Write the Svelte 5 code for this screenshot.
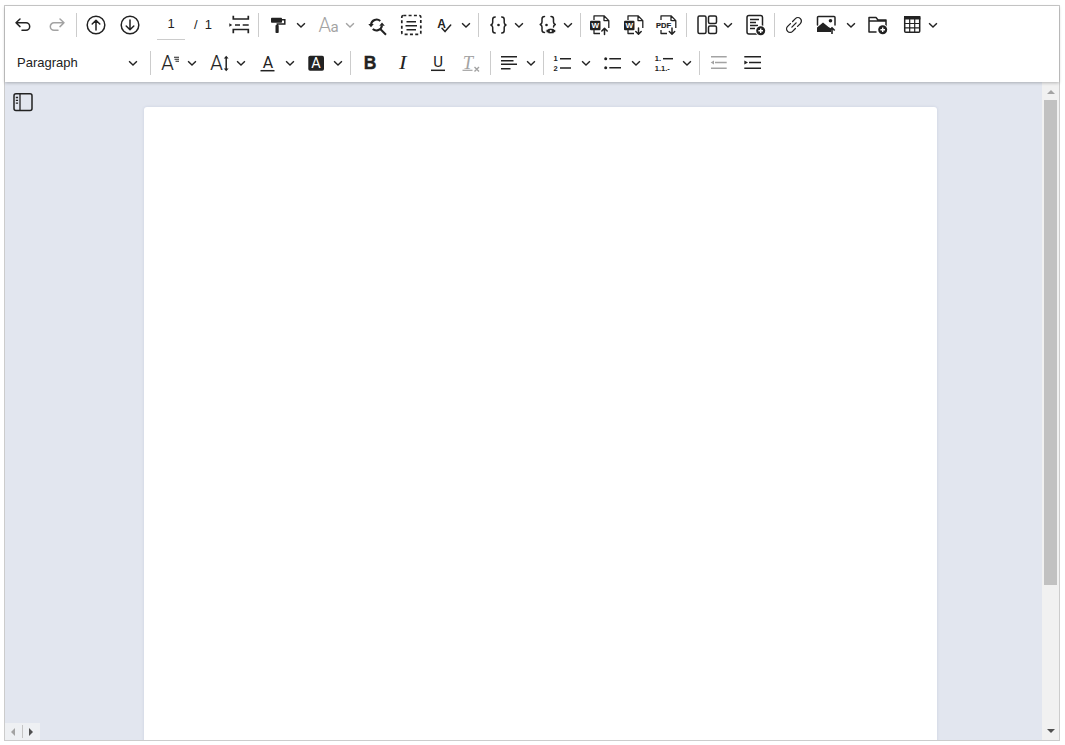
<script>
  const line = 'fill="none" stroke="currentColor" stroke-width="1.5" stroke-linecap="round" stroke-linejoin="round"';
  const thin = 'fill="none" stroke="currentColor" stroke-width="1.3" stroke-linejoin="round"';
  const sans = 'font-family="Liberation Sans, Arial, sans-serif"';
  const serif = 'font-family="Liberation Serif, Times New Roman, serif"';
  const bigA = 'x="9.500" y="19" font-size="20" font-weight="300" text-anchor="middle" fill="currentColor" stroke="currentColor" stroke-width=".15" font-family="Roboto, sans-serif"';

  const braces = (bottom) =>
    `<path ${line} d="M9.500 4C7.500 4 7 5 7 6.500v3c0 1.200-.7 2-1.800 2.500C6.300 12.500 7 13.300 7 14.500v3c0 1.500.5 2.500 2.500 2.500"/>` +
    (bottom
      ? `<path ${line} d="M16 4c2 0 2.500 1 2.500 2.500v3c0 1.200.7 2 1.800 2.500-1.100.5-1.800 1.300-1.800 2.500"/>`
      : `<path ${line} d="M16 4c2 0 2.500 1 2.500 2.500v3c0 1.200.7 2 1.800 2.500-1.100.5-1.800 1.300-1.800 2.500v3c0 1.500-.5 2.500-2.500 2.500"/>`);

  const docOutline = `<path ${thin} d="M6 7V2.800h10l4.800 4.800v7.400M6 17v3.500h6M16 2.800v4.800h4.800"/>`;
  const wordBadge = `<rect x="2" y="7.700" width="10.500" height="9.600" rx="1" fill="currentColor"/><text x="7.200" y="15.200" font-size="8" font-weight="700" text-anchor="middle" fill="#fff" ${sans}>W</text>`;
  const plusBadge = (cx, cy) =>
    `<circle cx="${cx}" cy="${cy}" r="5.500" fill="#fff"/><circle cx="${cx}" cy="${cy}" r="4.500" fill="currentColor"/><path d="M${cx - 2.3} ${cy}h4.600M${cx} ${cy - 2.3}v4.600" stroke="#fff" stroke-width="1.400"/>`;

  const icons = {
    undo: `<path ${line} d="M9 6 5 9.800l4 3.800M5 9.800h10a3.700 3.700 0 0 1 0 7.400h-4"/>`,
    redo: `<path ${line} d="M15 6l4 3.800-4 3.800M19 9.800H9a3.700 3.700 0 0 0 0 7.400h4"/>`,
    up: `<circle cx="12" cy="12" r="8.800" ${line} stroke-width="1.700"/><path ${line} stroke-width="1.700" d="M12 17V7.500M8.200 11 12 7.200l3.800 3.800"/>`,
    down: `<circle cx="12" cy="12" r="8.800" ${line} stroke-width="1.700"/><path ${line} stroke-width="1.700" d="M12 7v9.500M8.200 13l3.800 3.800 3.800-3.800"/>`,
    break: `<path fill="none" stroke="#222" stroke-width="1.700" d="M6.300 2.700V6h15V2.700M6.300 20.300V16.500h15v3.800M8 12h5M15.700 12h6"/><path d="M2.300 10.300 5.200 12l-2.900 1.700z" fill="currentColor"/>`,
    paint: `<rect x="5" y="4.700" width="11" height="5" rx=".8" fill="currentColor"/><path d="M16 6.700h2.800v4.300h-7.500v2" fill="none" stroke="currentColor" stroke-width="1.500"/><rect x="9.500" y="12" width="3.200" height="8" rx=".8" fill="currentColor"/>`,
    aa: `<text x="2.500" y="19" font-size="20" font-weight="300" font-family="Roboto, sans-serif" fill="currentColor">A</text><text x="14.500" y="19" font-size="15" font-family="Roboto, sans-serif" fill="currentColor">a</text>`,
    replace: `<path fill="none" stroke="currentColor" stroke-width="2" d="M6 11.500a5.700 5.700 0 0 1 9.300-3.600M17 12.500a5.700 5.700 0 0 1-9.300 3.600M15.500 16.200 21 21.700"/><path d="M3.300 11 6 14.300 8.800 11zM19.800 12.800 17 9.500l-2.700 3.300z" fill="currentColor"/>`,
    select: `<rect x="2.800" y="2.500" width="19" height="18.800" rx="1.500" fill="none" stroke="currentColor" stroke-width="1.700" stroke-dasharray="3 2.300"/><path d="M7.500 8.700h9.500M6.500 12.700h11.500M7.500 16.700h9.500" stroke="currentColor" stroke-width="1.400"/>`,
    spell: `<text x="9.500" y="14.800" font-size="12" font-weight="700" text-anchor="middle" fill="currentColor" ${sans}>A</text><path ${line} d="M10 15.300l3 3.300 5.700-6.600"/>`,
    code: `<g transform="translate(.7)">${braces(false)}<circle cx="12.800" cy="12" r="1.300" fill="currentColor"/></g>`,
    codeview: `<g transform="translate(1 -.5)">${braces(true)}<circle cx="11.500" cy="12.500" r="1.300" fill="currentColor"/><path d="M10.500 18.500c2.700-3.800 8-3.800 10.700 0-2.700 3.800-8 3.800-10.700 0z" fill="currentColor" stroke="#fff" stroke-width=".8"/><circle cx="15.800" cy="18.500" r="1.100" fill="#fff"/></g>`,
    wordup: `${docOutline}${wordBadge}<path ${line} d="M16.500 21.500v-6M13.800 18l2.700-2.700 2.700 2.700"/>`,
    worddown: `${docOutline}${wordBadge}<path ${line} d="M16.500 15v6M13.800 18.500l2.700 2.700 2.700-2.700"/>`,
    pdf: `<path ${thin} d="M6 7V2.800h10l4.800 4.800v7.400M6 17v3.500h6M16 2.800v4.800h4.800"/><rect x="1" y="8" width="15.500" height="8.500" fill="#fff"/><text x="8.600" y="15" font-size="7.500" font-weight="700" text-anchor="middle" fill="currentColor" stroke="currentColor" stroke-width=".2" ${sans}>PDF</text><path ${line} d="M17 15v6M14.300 18.500l2.700 2.700 2.700-2.700"/>`,
    layout: `<g fill="none" stroke="currentColor" stroke-width="1.500"><rect x="4" y="3" width="8" height="17.500" rx="1.500"/><rect x="14.500" y="3" width="8" height="7.500" rx="1.500"/><rect x="14.500" y="13" width="8" height="7.500" rx="1.500"/></g>`,
    docadd: `<rect x="4" y="2.500" width="15.500" height="18.500" rx="2" ${line}/><path d="M7 6.500h9M7 9.500h6M7 12.500h8M7 15.500h5" stroke="currentColor" stroke-width="1.300"/>${plusBadge(17.7, 17.7)}`,
    link: `<g transform="rotate(45 12 12)"><path fill="none" stroke="currentColor" stroke-width="1.300" stroke-linecap="round" d="M8.500 10.500V6.500a3.500 3.500 0 0 1 7 0v4M15.500 13.500v4a3.500 3.500 0 0 1-7 0v-4M12 9v6"/></g>`,
    image: `<path d="M1.500 12V4.500a1 1 0 0 1 1-1h15.500a1 1 0 0 1 1 1V12" ${line}/><path d="M1 19v-4.500l6-5 5.500 4.500 2.500 1.500V19z" fill="currentColor"/><circle cx="14.500" cy="7.700" r="1.800" fill="currentColor"/><path d="M16 21v-6M13.300 17.500l2.700-2.700 2.700 2.700" fill="none" stroke="currentColor" stroke-width="1.600"/>`,
    folder: `<path ${line} d="M3 8V4.500h7l2 2.500h8v6M3 8v11h7M3 8h17"/>${plusBadge(16.7, 16.7)}`,
    table: `<rect x="5.700" y="3.700" width="15" height="15.500" rx="1" fill="none" stroke="currentColor" stroke-width="1.500"/><rect x="5" y="3" width="16.400" height="3.500" fill="currentColor"/><path d="M10.700 6v13M15.700 6v13M6 10.500h14.500M6 14.800h14.500" stroke="currentColor" stroke-width="1.200"/>`,
    fontfam: `<text ${bigA}>A</text><path d="M16 6.300h5M16.500 8.300h4.500M17.500 10.300h3.500" stroke="currentColor" stroke-width="1.100"/>`,
    fontsize: `<text ${bigA}>A</text><path d="M19.200 6v13" stroke="currentColor" stroke-width="1.500"/><path d="M16.800 7.500 19.200 4.700l2.400 2.800zM16.800 17.500l2.400 2.800 2.400-2.800z" fill="currentColor"/>`,
    color: `<text x="12" y="16.500" font-size="16" text-anchor="middle" fill="currentColor" font-family="Roboto, sans-serif">A</text><path d="M4.500 19.700h14" stroke="currentColor" stroke-width="1.500"/>`,
    bgcolor: `<rect x="4.300" y="4.700" width="15.700" height="15" rx="1.800" fill="currentColor"/><text x="12.100" y="17.300" font-size="14.500" text-anchor="middle" fill="#fff" font-family="Roboto, sans-serif">A</text>`,
    bold: `<text x="12" y="18.300" font-size="17.500" font-weight="700" text-anchor="middle" fill="currentColor" stroke="currentColor" stroke-width=".4" ${sans}>B</text>`,
    italic: `<text x="7" y="18.300" font-size="18.500" font-style="italic" textLength="7.500" lengthAdjust="spacingAndGlyphs" fill="currentColor" ${serif}>I</text>`,
    underline: `<text x="12" y="15.800" font-size="15" text-anchor="middle" fill="currentColor" font-family="Roboto, sans-serif">U</text><path d="M5 19.300h14" stroke="currentColor" stroke-width="1.500"/>`,
    clear: `<text x="9" y="17.500" font-size="18.500" font-style="italic" text-anchor="middle" fill="currentColor" ${serif}>T</text><path d="M3.500 19.300h10" stroke="currentColor" stroke-width="1.200"/><path d="M15.500 16l4.500 4.500M20 16l-4.500 4.500" stroke="currentColor" stroke-width="1.400"/>`,
    align: `<path d="M4 5.700h16M4 9.700h12.500M4 13.300h16M4 17.700h9.500" stroke="currentColor" stroke-width="1.500"/>`,
    ol: `<text x="4.500" y="10" font-size="7.500" font-weight="700" text-anchor="middle" fill="currentColor" ${sans}>1</text><text x="4.500" y="19.700" font-size="7.500" font-weight="700" text-anchor="middle" fill="currentColor" ${sans}>2</text><path d="M9 7.700h11M9 17h11" stroke="currentColor" stroke-width="1.500"/>`,
    ul: `<circle cx="4.700" cy="7.700" r="1.500" fill="currentColor"/><circle cx="4.700" cy="16.700" r="1.500" fill="currentColor"/><path d="M8.300 7.700h11.700M8.300 16.700h11.700" stroke="currentColor" stroke-width="1.500"/>`,
    ml: `<text x="2.800" y="10" font-size="7.500" font-weight="700" fill="currentColor" ${sans}>1.</text><text x="2.800" y="19.500" font-size="7.500" font-weight="700" fill="currentColor" ${sans}>1.1.-</text><path d="M11 7.700h10" stroke="currentColor" stroke-width="1.500"/>`,
    outdent: `<path d="M4 5.700h15.700M8 11.500h11.700M4 17.300h15.700" stroke="currentColor" stroke-width="1.500"/><path d="M3.700 11.500 7 9.500v4z" fill="currentColor"/>`,
    indent: `<path d="M3.300 5.700h16.700M8 11.500h12M3.300 17.300h16.700" stroke="currentColor" stroke-width="1.500"/><path d="M7 11.500 3.300 9.500v4z" fill="currentColor"/>`
  };

  // name:width:dim, "v" is a dropdown chevron, "|" a divider
  const row1 = ['undo', 'redo::dim', '|', 'up', 'down', 'pager', 'break', '|', 'paint', 'v', 'aa:33:dim', 'v::dim',
    'replace', 'select', 'spell:32', 'v', '|', 'code:32', 'v', 'codeview:33', 'v', '|', 'wordup', 'worddown:33', 'pdf', '|',
    'layout:33', 'v', 'docadd', '|', 'link', 'image', 'v', 'folder', 'table:32', 'v'];
  const row2 = ['para', '|', 'fontfam:33', 'v', 'fontsize:33', 'v', 'color:33', 'v', 'bgcolor:32', 'v', '|',
    'bold', 'italic', 'underline:33', 'clear::dim', '|', 'align:32', 'v', '|', 'ol', 'v', 'ul', 'v', 'ml:35', 'v', '|',
    'outdent::dim', 'indent'];

  const parse = (row) => row.map((s) => {
    const [name, w, dim] = s.split(':');
    return { name, w: w || 34, dim: !!dim };
  });
  const rows = [parse(row1), parse(row2)];
</script>

<div class="editor">
  <div class="toolbar">
    {#each rows as row}
      <div class="row">
        {#each row as item}
          {#if item.name === '|'}
            <span class="sep"></span>
          {:else if item.name === 'v'}
            <button class="chev" class:dim={item.dim}>
              <svg width="12" height="12" viewBox="0 0 12 12"><path d="M2.100 4.200 6 8.100l3.900-3.900" fill="none" stroke="currentColor" stroke-width="1.400"/></svg>
            </button>
          {:else if item.name === 'pager'}
            <div class="pager">
              <input value="1" />
              <span>/</span>
              <span>1</span>
            </div>
          {:else if item.name === 'para'}
            <div class="para">
              <span>Paragraph</span>
              <svg width="12" height="12" viewBox="0 0 12 12"><path d="M2.100 4.200 6 8.100l3.900-3.900" fill="none" stroke="currentColor" stroke-width="1.400"/></svg>
            </div>
          {:else}
            <button class="btn w{item.w}" class:dim={item.dim}>
              <svg width="24" height="24" viewBox="0 0 24 24">{@html icons[item.name]}</svg>
            </button>
          {/if}
        {/each}
      </div>
    {/each}
  </div>

  <div class="body">
    <div class="canvas">
      <button class="panel-toggle">
        <svg width="24" height="24" viewBox="0 0 24 24">
          <rect x="3" y="3.700" width="18" height="16.700" rx="2" fill="none" stroke="currentColor" stroke-width="1.500" />
          <path d="M9 3.700v16.700M4.800 7.500h2.300M4.800 10.300h2.300M4.800 13.100h2.300" fill="none" stroke="currentColor" stroke-width="1.300" />
        </svg>
      </button>
      <div class="page"></div>
      <div class="mini-scroll">
        <span class="tri left"></span>
        <span class="mini-sep"></span>
        <span class="tri right"></span>
      </div>
    </div>
    <div class="scrollbar">
      <span class="arrow up"></span>
      <div class="track"><div class="thumb"></div></div>
      <span class="arrow down"></span>
    </div>
  </div>
</div>

<style>
  :global(body) {
    background: #fff;
    overflow: hidden;
  }

  .editor {
    box-sizing: border-box;
    width: 1056px;
    height: 736px;
    margin: 5px 0 0 4px;
    border: 1px solid #ccc;
    display: flex;
    flex-direction: column;
    font-family: "Liberation Sans", Arial, sans-serif;
    font-size: 13px;
    color: #222;
  }

  .toolbar {
    position: relative;
    z-index: 1;
    background: #fff;
    padding-left: 1px;
    box-shadow: 0 1px 3px rgba(0, 0, 0, 0.25);
  }

  .row {
    display: flex;
    align-items: center;
    height: 38px;
  }

  .sep {
    flex: none;
    width: 1px;
    height: 24px;
    margin: 0 2px;
    background: #ccc;
  }

  button {
    padding: 0;
    border: 0;
    background: none;
    color: inherit;
    display: flex;
    align-items: center;
    justify-content: center;
  }

  .btn {
    flex: none;
    height: 34px;
  }
  .w32 { width: 32px; }
  .w33 { width: 33px; }
  .w34 { width: 34px; }
  .w35 { width: 35px; }

  .chev {
    flex: none;
    width: 12px;
    height: 34px;
    margin-right: 4px;
  }

  .dim {
    color: #a3a3a3;
  }

  .pager {
    flex: none;
    box-sizing: border-box;
    width: 65px;
    margin-left: 10px;
    display: flex;
    align-items: center;
    gap: 7px;
  }

  .pager span {
    padding-bottom: 2px;
  }

  .pager input {
    box-sizing: border-box;
    width: 28px;
    height: 30px;
    margin-right: 2px;
    padding: 0 0 2px;
    border: 0;
    border-bottom: 1px solid #ccc;
    outline: none;
    text-align: center;
    font: inherit;
    color: inherit;
  }

  .para {
    flex: none;
    box-sizing: border-box;
    width: 142px;
    padding: 0 9px 0 11px;
    display: flex;
    align-items: center;
    justify-content: space-between;
  }

  .para span {
    padding-bottom: 2px;
  }

  .body {
    flex: 1;
    min-height: 0;
    display: flex;
  }

  .canvas {
    position: relative;
    flex: 1;
    overflow: hidden;
    background: #e2e6ef;
    padding-top: 25px;
  }

  .panel-toggle {
    position: absolute;
    left: 6px;
    top: 8px;
  }

  .page {
    width: 793px;
    height: 1123px;
    margin-left: 139px;
    background: #fff;
    border-radius: 3px;
    box-shadow: 0 0 3px rgba(60, 80, 140, 0.15);
  }

  .mini-scroll {
    position: absolute;
    left: 0;
    bottom: 0;
    width: 35px;
    height: 17px;
    background: #eef0f3;
    display: flex;
    align-items: center;
  }

  .tri {
    width: 0;
    height: 0;
    border-top: 4px solid transparent;
    border-bottom: 4px solid transparent;
  }
  .tri.left {
    margin-left: 6px;
    border-right: 4px solid #a3a3a3;
  }
  .tri.right {
    margin-left: 6px;
    border-left: 4px solid #505050;
  }

  .mini-sep {
    width: 1px;
    height: 13px;
    margin-left: 7px;
    background: #c4c4c4;
  }

  .scrollbar {
    flex: none;
    width: 17px;
    background: #f1f1f1;
    display: flex;
    flex-direction: column;
    align-items: center;
  }

  .track {
    flex: 1;
    width: 100%;
  }

  .thumb {
    width: 13px;
    height: 485px;
    margin-left: 2px;
    background: #c1c1c1;
  }

  .arrow {
    flex: none;
    width: 0;
    height: 0;
    border-left: 4px solid transparent;
    border-right: 4px solid transparent;
  }
  .arrow.up {
    margin: 8px 0 6px;
    border-bottom: 4px solid #a3a3a3;
  }
  .arrow.down {
    margin: 4px 0 7px;
    border-top: 4px solid #505050;
  }
</style>
